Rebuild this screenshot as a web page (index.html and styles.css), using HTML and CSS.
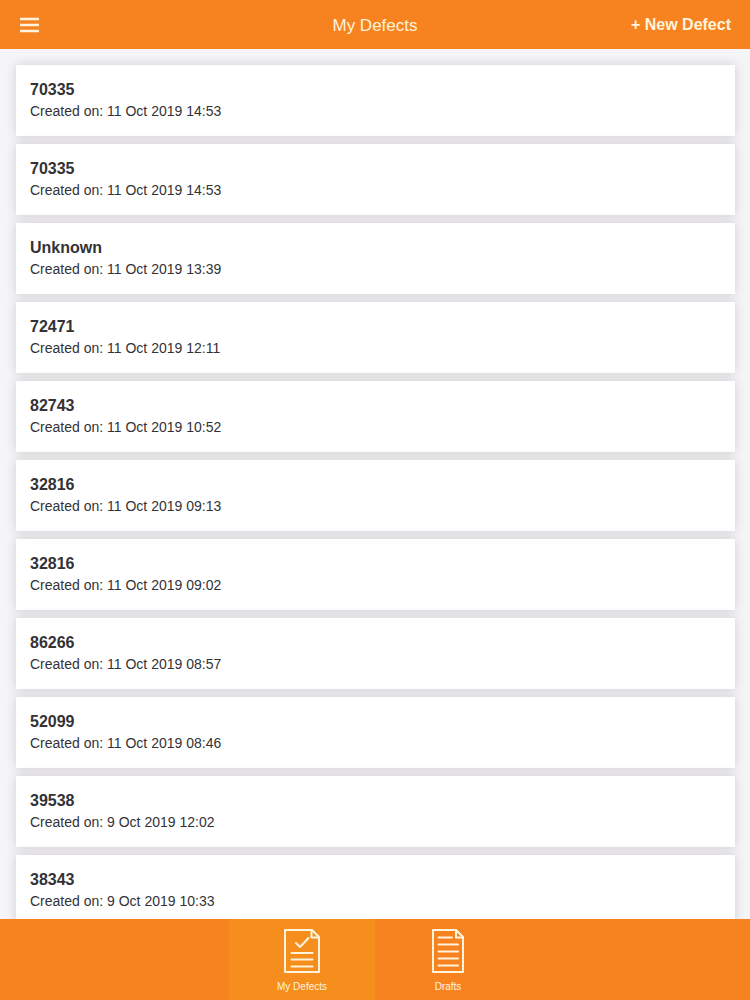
FILE: index.html
```html
<!DOCTYPE html>
<html lang="en">
<head>
  <meta charset="UTF-8">
  <title>My Defects</title>
  <meta name="viewport" content="width=device-width, initial-scale=1.0">
  <link rel="stylesheet" href="styles.css">
</head>
<body>

  <header class="navbar">
    <button type="button" class="menu-button" aria-label="Menu">
      <svg width="20" height="16" viewBox="0 0 20 16" fill="none" stroke="currentColor" stroke-width="2.4">
        <path d="M1 2h19M1 8h19M1 14h19"/>
      </svg>
    </button>
    <h1>My Defects</h1>
    <button type="button" class="new-button">+ New Defect</button>
  </header>

  <main>
    <ul class="defect-list">
      <li class="defect">
        <h2>70335</h2>
        <p>Created on: 11 Oct 2019 14:53</p>
      </li>
      <li class="defect">
        <h2>70335</h2>
        <p>Created on: 11 Oct 2019 14:53</p>
      </li>
      <li class="defect">
        <h2>Unknown</h2>
        <p>Created on: 11 Oct 2019 13:39</p>
      </li>
      <li class="defect">
        <h2>72471</h2>
        <p>Created on: 11 Oct 2019 12:11</p>
      </li>
      <li class="defect">
        <h2>82743</h2>
        <p>Created on: 11 Oct 2019 10:52</p>
      </li>
      <li class="defect">
        <h2>32816</h2>
        <p>Created on: 11 Oct 2019 09:13</p>
      </li>
      <li class="defect">
        <h2>32816</h2>
        <p>Created on: 11 Oct 2019 09:02</p>
      </li>
      <li class="defect">
        <h2>86266</h2>
        <p>Created on: 11 Oct 2019 08:57</p>
      </li>
      <li class="defect">
        <h2>52099</h2>
        <p>Created on: 11 Oct 2019 08:46</p>
      </li>
      <li class="defect">
        <h2>39538</h2>
        <p>Created on: 9 Oct 2019 12:02</p>
      </li>
      <li class="defect">
        <h2>38343</h2>
        <p>Created on: 9 Oct 2019 10:33</p>
      </li>
    </ul>
  </main>

  <nav class="tabbar">
    <a href="#defects" class="tab active">
      <svg width="36" height="44" viewBox="0 0 36 44" fill="none" stroke="currentColor" stroke-width="2" stroke-linejoin="round" stroke-linecap="round">
        <path d="M1 1h27l7 7v35H1z"/>
        <path d="M27.500 1v7.500h7.500"/>
        <path d="M12 14l4 4 8.500-9"/>
        <path d="M7.500 24h21M7.500 30.500h21M7.500 37.500h21"/>
      </svg>
      <span>My Defects</span>
    </a>
    <a href="#drafts" class="tab">
      <svg width="32" height="44" viewBox="0 0 32 44" fill="none" stroke="currentColor" stroke-width="2" stroke-linejoin="round" stroke-linecap="round">
        <path d="M1 1h23l7 7v35H1z"/>
        <path d="M24 1v7.500h7"/>
        <path d="M6.500 8.500h13.500M6.500 15.500h19.500M6.500 22.500h19.500M6.500 29.500h19.500M6.500 36.500h19.500"/>
      </svg>
      <span>Drafts</span>
    </a>
  </nav>

</body>
</html>
```

FILE: styles.css
```css
* {
  box-sizing: border-box;
}

body {
  display: flex;
  flex-direction: column;
  height: 100vh;
  margin: 0;
  font-family: 'Liberation Sans', Arial, sans-serif;
  background: #f5f4f7;
  color: #333236;
}

button {
  padding: 0;
  border: none;
  background: none;
  color: inherit;
  font: inherit;
  cursor: pointer;
}

/* Top bar */
.navbar {
  display: grid;
  grid-template-columns: 1fr auto 1fr;
  align-items: center;
  flex: none;
  height: 49px;
  padding: 0 19px;
  background: #f78320;
  color: #fff3dc;
}

.navbar h1 {
  margin: 0;
  padding-top: 2px;
  font-size: 17px;
  font-weight: normal;
}

.menu-button {
  display: flex;
  justify-self: start;
}

.new-button {
  justify-self: end;
  font-size: 16px;
  font-weight: bold;
}

/* List of defects */
main {
  flex: 1;
  min-height: 0;
  overflow-y: auto;
  scrollbar-width: none;
}

.defect-list {
  display: flex;
  flex-direction: column;
  gap: 8px;
  margin: 0;
  padding: 16px 15px 16px 16px;
  list-style: none;
}

.defect {
  padding: 15px 14px 14px;
  background: #fff;
  box-shadow: 0 0 10px rgba(60, 50, 55, 0.19);
}

.defect h2 {
  margin: 0;
  font-size: 16px;
  line-height: 20px;
}

.defect p {
  margin: 0;
  font-size: 14px;
  line-height: 22px;
}

/* Bottom tabs */
.tabbar {
  display: flex;
  justify-content: center;
  flex: none;
  height: 81px;
  background: #f78320;
}

.tab {
  display: flex;
  flex-direction: column;
  align-items: center;
  gap: 6px;
  width: 146px;
  padding-top: 10px;
  color: #fff3dc;
  font-size: 10px;
  line-height: 15px;
  text-decoration: none;
}

.tab.active {
  background: #f58e1d;
}
```
